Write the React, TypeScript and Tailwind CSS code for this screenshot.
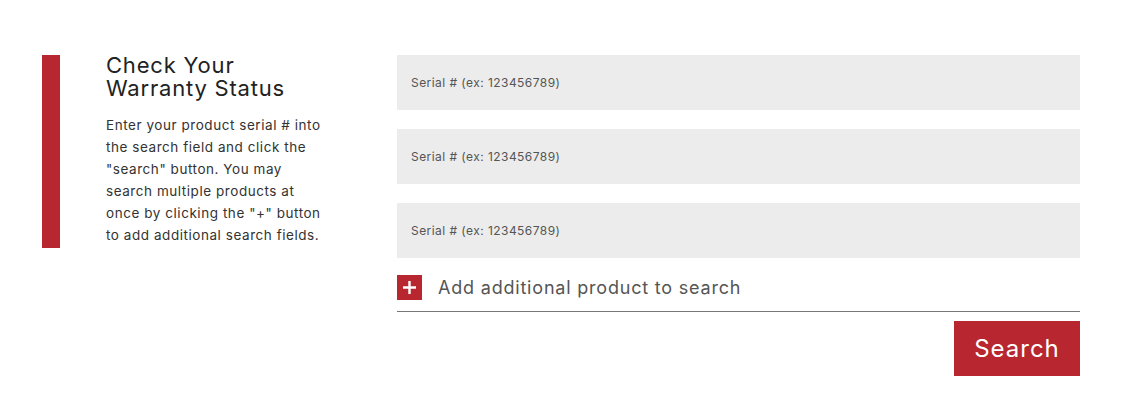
import { useState } from 'react';

export default function App() {
  const [fields, setFields] = useState(['', '', '']);

  const addField = () => setFields((prev) => [...prev, '']);

  return (
    <div
      className="w-[1128px] h-[400px] bg-white flex pl-[42px] pt-[55px]"
      style={{ fontFamily: 'Inter, "Open Sans", sans-serif' }}
    >
      <div className="flex items-start w-[355px]">
        <div className="w-[18px] h-[193px] bg-[#b8262f] shrink-0" />
        <div className="ml-[46px] w-[230px]">
          <h2 className="text-[22px] leading-[23px] tracking-[0.8px] text-[#222] font-normal -mt-[1px]">
            Check Your
            <br />
            Warranty Status
          </h2>
          <p className="mt-[14px] text-[13.5px] leading-[22px] tracking-[0.55px] text-[#333] w-[225px]">
            Enter your product serial # into the search field and click the
            "search" button. You may search multiple products at once by
            clicking the "+" button to add additional search fields.
          </p>
        </div>
      </div>

      <div className="w-[683px] flex flex-col">
        <div className="flex flex-col gap-[19px]">
          {fields.map((value, i) => (
            <input
              key={i}
              type="text"
              value={value}
              onChange={(e) =>
                setFields((prev) =>
                  prev.map((v, j) => (j === i ? e.target.value : v))
                )
              }
              placeholder="Serial # (ex: 123456789)"
              className="h-[55px] w-full bg-[#ececec] px-[14px] text-[12px] tracking-[0.45px] text-[#333] placeholder:text-[#555] focus:outline-none"
            />
          ))}
        </div>

        <button
          type="button"
          onClick={addField}
          className="mt-[16px] flex items-center gap-[16px] pb-[10px] border-b border-[#777] text-left"
        >
          <span className="w-[25px] h-[25px] bg-[#b8262f] flex items-center justify-center">
            <svg width="15" height="15" viewBox="0 0 15 15">
              <path d="M7.5 1v13M1 7.5h13" stroke="white" strokeWidth="2.4" />
            </svg>
          </span>
          <span className="text-[18px] text-[#555] tracking-[0.8px]">
            Add additional product to search
          </span>
        </button>

        <div className="flex justify-end mt-[9px]">
          <button
            type="button"
            className="w-[126px] h-[55px] bg-[#b8262f] text-white text-[24px] tracking-[1px]"
          >
            Search
          </button>
        </div>
      </div>
    </div>
  );
}
